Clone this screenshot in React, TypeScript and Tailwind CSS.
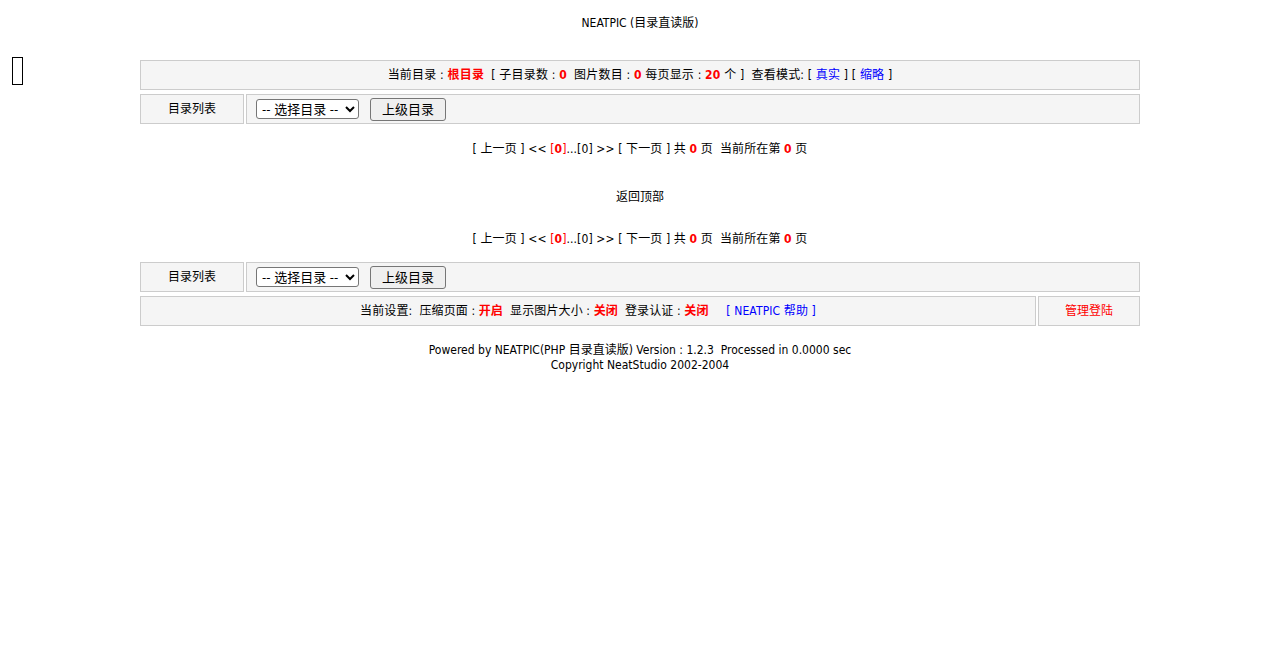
import React from 'react';

const font = { fontFamily: '"DejaVu Sans Condensed", "Noto Sans CJK SC", sans-serif' };

function DirRow() {
  return (
    <div className="flex gap-[2px]">
      <div className="w-[104px] h-[30px] flex items-center justify-center border border-[#cccccc] bg-[#f5f5f5]">
        目录列表
      </div>
      <div className="flex-1 h-[30px] flex items-center gap-[11px] pl-[9px] border border-[#cccccc] bg-[#f5f5f5]">
        <select className="h-[20px] w-[103px] border border-[#767676] rounded-[3px] bg-white text-[13px] px-[1px]">
          <option>-- 选择目录 --</option>
        </select>
        <button className="h-[23px] w-[76px] border border-[#767676] rounded-[3px] bg-[#efefef] text-[13px]">
          上级目录
        </button>
      </div>
    </div>
  );
}

function Pager() {
  return (
    <p className="text-center tracking-[0.12px]">
      [ 上一页 ] &lt;&lt; <span className="text-[#ff0000]">[<b>0</b>]</span>...[0] &gt;&gt; [ 下一页 ] 共{' '}
      <b className="text-[#ff0000]">0</b> 页&nbsp; 当前所在第 <b className="text-[#ff0000]">0</b> 页
    </p>
  );
}

export default function App() {
  return (
    <div className="relative min-h-[657px] bg-white text-[12px] text-black leading-[15px]" style={font}>
      {/* missing-glyph box */}
      <div className="absolute left-[12px] top-[57px] w-[11px] h-[28px] border-[1.5px] border-black" />

      <p className="text-center pt-[16px]">NEATPIC (目录直读版)</p>

      <div className="w-[1000px] mx-auto mt-[29px]">
        <div className="h-[30px] flex items-center justify-center border border-[#cccccc] bg-[#f5f5f5] tracking-[0.19px]">
          <span>
            当前目录 : <b className="text-[#ff0000]">根目录</b>&nbsp; [ 子目录数 : <b className="text-[#ff0000]">0</b>&nbsp; 图片数目 :{' '}
            <b className="text-[#ff0000]">0</b> 每页显示 : <b className="text-[#ff0000]">20</b> 个 ]&nbsp; 查看模式: [{' '}
            <span className="text-[#0000ff]">真实</span> ] [ <span className="text-[#0000ff]">缩略</span> ]
          </span>
        </div>
        <div className="mt-[4px]">
          <DirRow />
        </div>

        <div className="mt-[18px]">
          <Pager />
        </div>
        <p className="text-center mt-[33px]">返回顶部</p>
        <div className="mt-[27px]">
          <Pager />
        </div>

        <div className="mt-[15px]">
          <DirRow />
        </div>
        <div className="flex gap-[2px] mt-[4px]">
          <div className="flex-1 h-[30px] flex items-center justify-center border border-[#cccccc] bg-[#f5f5f5] tracking-[0.12px]">
            <span>
              当前设置:&nbsp; 压缩页面 : <b className="text-[#ff0000]">开启</b>&nbsp; 显示图片大小 : <b className="text-[#ff0000]">关闭</b>&nbsp; 登录认证 :{' '}
              <b className="text-[#ff0000]">关闭</b>&nbsp;&nbsp;&nbsp;&nbsp; <span className="text-[#0000ff]">[ NEATPIC 帮助 ]</span>
            </span>
          </div>
          <div className="w-[102px] h-[30px] flex items-center justify-center border border-[#cccccc] bg-[#f5f5f5] text-[#ff0000]">
            管理登陆
          </div>
        </div>
      </div>

      <div className="text-center mt-[17px]">
        <p>Powered by NEATPIC(PHP 目录直读版) Version : 1.2.3&nbsp; Processed in 0.0000 sec</p>
        <p>Copyright NeatStudio 2002-2004</p>
      </div>
    </div>
  );
}
